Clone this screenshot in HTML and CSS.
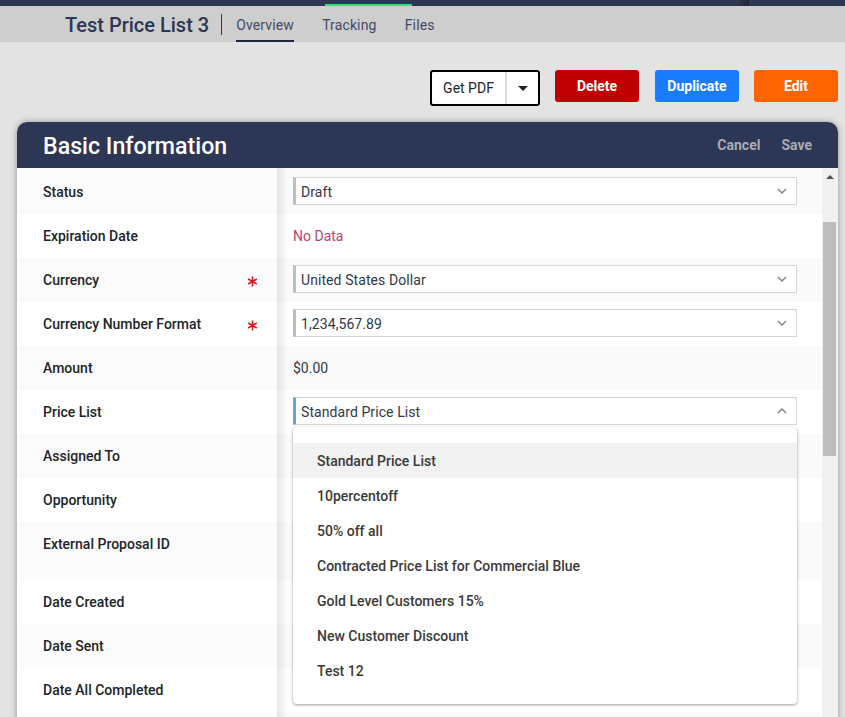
FILE: index.html
```html
<!DOCTYPE html>
<html lang="en">
<head>
<meta charset="utf-8">
<title>Test Price List 3</title>
<link rel="stylesheet" href="styles.css">
</head>
<body>
<div class="topbar"><span class="topbar-active"></span><span class="topbar-shade"></span></div>
<header class="subnav">
  <h1 class="doc-title">Test Price List 3</h1>
  <nav class="tabs">
    <a class="tab tab-active">Overview</a>
    <a class="tab">Tracking</a>
    <a class="tab">Files</a>
  </nav>
</header>
<div class="actions">
  <div class="split">
    <span class="split-main">Get PDF</span>
    <span class="split-caret"><svg width="10" height="5" viewBox="0 0 10 5"><path d="M0 0h10L5 5z" fill="#212529"/></svg></span>
  </div>
  <button class="btn btn-red">Delete</button>
  <button class="btn btn-blue">Duplicate</button>
  <button class="btn btn-orange">Edit</button>
</div>
<section class="card">
  <div class="card-head">
    <h2 class="card-title">Basic Information</h2>
    <div class="card-links"><span>Cancel</span><span>Save</span></div>
  </div>
  <div class="card-body">
    <div class="rows">
      <div class="row first alt"><div class="label">Status</div><div class="value"><div class="select"><span>Draft</span><svg class="chev" width="10" height="6" viewBox="0 0 10 6"><path d="M1 1l4 4 4-4" fill="none" stroke="#808080" stroke-width="1.4"/></svg></div></div></div>
      <div class="row"><div class="label">Expiration Date</div><div class="value nodata">No Data</div></div>
      <div class="row alt"><div class="label">Currency<svg class="req" width="11" height="11" viewBox="0 0 11 11"><path d="M5.5 0.5v10M1.2 3l8.6 5M9.8 3l-8.6 5" fill="none" stroke="#d8141e" stroke-width="1.5"/></svg></div><div class="value"><div class="select"><span>United States Dollar</span><svg class="chev" width="10" height="6" viewBox="0 0 10 6"><path d="M1 1l4 4 4-4" fill="none" stroke="#808080" stroke-width="1.4"/></svg></div></div></div>
      <div class="row"><div class="label">Currency Number Format<svg class="req" width="11" height="11" viewBox="0 0 11 11"><path d="M5.5 0.5v10M1.2 3l8.6 5M9.8 3l-8.6 5" fill="none" stroke="#d8141e" stroke-width="1.5"/></svg></div><div class="value"><div class="select"><span>1,234,567.89</span><svg class="chev" width="10" height="6" viewBox="0 0 10 6"><path d="M1 1l4 4 4-4" fill="none" stroke="#808080" stroke-width="1.4"/></svg></div></div></div>
      <div class="row alt"><div class="label">Amount</div><div class="value">$0.00</div></div>
      <div class="row"><div class="label">Price List</div><div class="value value-dd">
        <div class="select select-open"><span>Standard Price List</span><svg class="chev" width="10" height="6" viewBox="0 0 10 6"><path d="M1 5l4-4 4 4" fill="none" stroke="#808080" stroke-width="1.4"/></svg></div>
        <ul class="menu">
          <li class="menu-item menu-hover">Standard Price List</li>
          <li class="menu-item">10percentoff</li>
          <li class="menu-item">50% off all</li>
          <li class="menu-item">Contracted Price List for Commercial Blue</li>
          <li class="menu-item">Gold Level Customers 15%</li>
          <li class="menu-item">New Customer Discount</li>
          <li class="menu-item">Test 12</li>
        </ul>
      </div></div>
      <div class="row alt"><div class="label">Assigned To</div><div class="value"></div></div>
      <div class="row"><div class="label">Opportunity</div><div class="value"></div></div>
      <div class="row alt tall"><div class="label">External Proposal ID</div><div class="value"></div></div>
      <div class="row"><div class="label">Date Created</div><div class="value"></div></div>
      <div class="row alt"><div class="label">Date Sent</div><div class="value"></div></div>
      <div class="row"><div class="label">Date All Completed</div><div class="value"></div></div>
      <div class="row alt"><div class="label"></div><div class="value"></div></div>
    </div>
    <div class="scrollbar">
      <svg class="scroll-up" width="8" height="4" viewBox="0 0 8 4"><path d="M0 4h8L4 0z" fill="#505050"/></svg>
      <div class="scroll-thumb"></div>
    </div>
  </div>
</section>
</body>
</html>
```
FILE: styles.css
```css
* { box-sizing: border-box; }
html, body { height: 100%; }
body {
  margin: 0;
  height: 717px;
  overflow: hidden;
  background: #e3e3e3;
  font-family: Roboto, "Liberation Sans", sans-serif;
  font-size: 14px;
  color: #212529;
}
.topbar {
  height: 6px;
  background: #2d3654;
  display: flex;
  align-items: flex-end;
  padding-left: 325px;
}
.topbar-active { width: 87px; height: 2px; background: #2ee577; }
.topbar-shade {
  width: 12px;
  height: 6px;
  margin-left: 325px;
  background: linear-gradient(90deg, rgba(0,0,0,0), rgba(0,0,0,.3));
}
.subnav {
  height: 36px;
  background: #cecece;
  display: flex;
  align-items: center;
  padding-left: 65px;
}
.doc-title {
  margin: 0;
  font-size: 20px;
  font-weight: 500;
  color: #2d3654;
  line-height: 20px;
  padding: 1px 12px 0 0;
  border-right: 1px solid #2d3654;
}
.tabs { display: flex; gap: 28.3px; margin-left: 14px; height: 36px; }
.tab {
  display: flex;
  align-items: center;
  padding-top: 3px;
  color: #414a63;
  font-size: 14px;
  letter-spacing: .12px;
  border-bottom: 2px solid transparent;
}
.tab-active { border-bottom-color: #1e2640; }
.actions {
  display: flex;
  justify-content: flex-end;
  align-items: flex-start;
  padding: 28px 7px 0 0;
  height: 80px;
}
.split {
  display: flex;
  width: 110px;
  height: 36px;
  background: #fff;
  border: 2px solid #000;
  border-radius: 3px;
  margin-right: 15px;
}
.split-main {
  width: 75px;
  display: flex;
  align-items: center;
  justify-content: center;
  border-right: 2px solid #ddd;
  font-size: 14px;
}
.split-caret { flex: 1; display: flex; align-items: center; justify-content: center; }
.btn {
  width: 84px;
  height: 32px;
  border: 0;
  border-radius: 3px;
  color: #fff;
  font: 700 14px Roboto, "Liberation Sans", sans-serif;
  margin-right: 16px;
  padding: 0;
}
.btn-orange { margin-right: 0; }
.btn-red { background: #c00000; }
.btn-blue { background: #1a7cff; }
.btn-orange { background: #ff6400; margin-left: -1px; }
.card {
  margin: 0 7px 0 17px;
  border-radius: 10px 10px 0 0;
  box-shadow: 0 0 6px rgba(0,0,0,.35);
  background: #fff;
  height: 620px;
}
.card-head {
  height: 46px;
  background: #2d3654;
  border-radius: 10px 10px 0 0;
  display: flex;
  align-items: center;
  justify-content: space-between;
  padding: 0 26px;
}
.card-title { margin: 2px 0 0; font-size: 23.2px; font-weight: 500; color: #fff; }
.card-links { display: flex; gap: 21px; font-weight: 700; color: #a9acb5; }
.card-body { display: flex; height: 574px; overflow: hidden; }
.rows { flex: 1; min-width: 0; }
.row { display: flex; height: 44px; }
.row.tall { height: 58px; }
.row.first { height: 46px; }
.label {
  flex: 0 0 260px;
  padding: 13px 19px 0 26px;
  line-height: 18px;
  font-weight: 500;
  color: #212529;
  background: #fff;
  display: flex;
  justify-content: space-between;
}
.first .label { padding-top: 15px; }
.alt .label { background: #fbfbfb; }
.req { margin-top: 5px; }
.value {
  flex: 1;
  min-width: 0;
  padding: 13px 25px 0 16px;
  line-height: 18px;
  color: #33384a;
  background: linear-gradient(90deg, rgba(0,0,0,.09), rgba(0,0,0,0) 11px), #fff;
}
.first .value { padding-top: 15px; }
.alt .value { background: linear-gradient(90deg, rgba(0,0,0,.09), rgba(0,0,0,0) 11px), #fafafa; }
.value:has(.select) { padding-top: 7px; }
.first .value:has(.select) { padding-top: 9px; }
.nodata { color: #c2416f; }
.value-dd { position: relative; }
.select {
  height: 28px;
  background: #fff;
  border: 1px solid #d4d4d4;
  border-left: 3px solid #bdbdbd;
  display: flex;
  align-items: center;
  justify-content: space-between;
  padding: 2px 9px 0 5px;
  color: #33384a;
  letter-spacing: .08px;
}
.select .chev { margin-top: -2px; }
.select-open { border-left-color: #5fa8d8; }
.menu {
  position: absolute;
  left: 16px;
  right: 25px;
  top: 37px;
  height: 277px;
  z-index: 5;
  margin: 0;
  padding: 16px 0;
  list-style: none;
  background: #fff;
  border-radius: 4px;
  box-shadow: 0 1px 3px rgba(0,0,0,.4);
}
.menu-item {
  height: 35px;
  padding: 0 24px;
  display: flex;
  align-items: center;
  font-weight: 500;
  color: #3a3a3a;
}
.menu-hover { background: #f2f2f2; }
.scrollbar {
  flex: 0 0 16px;
  background: #f1f1f1;
  display: flex;
  flex-direction: column;
  align-items: center;
  padding: 7px 2px 0 1px;
}
.scroll-thumb {
  width: 13px;
  height: 234px;
  margin-top: 43px;
  background: #bdbdbd;
}
```
